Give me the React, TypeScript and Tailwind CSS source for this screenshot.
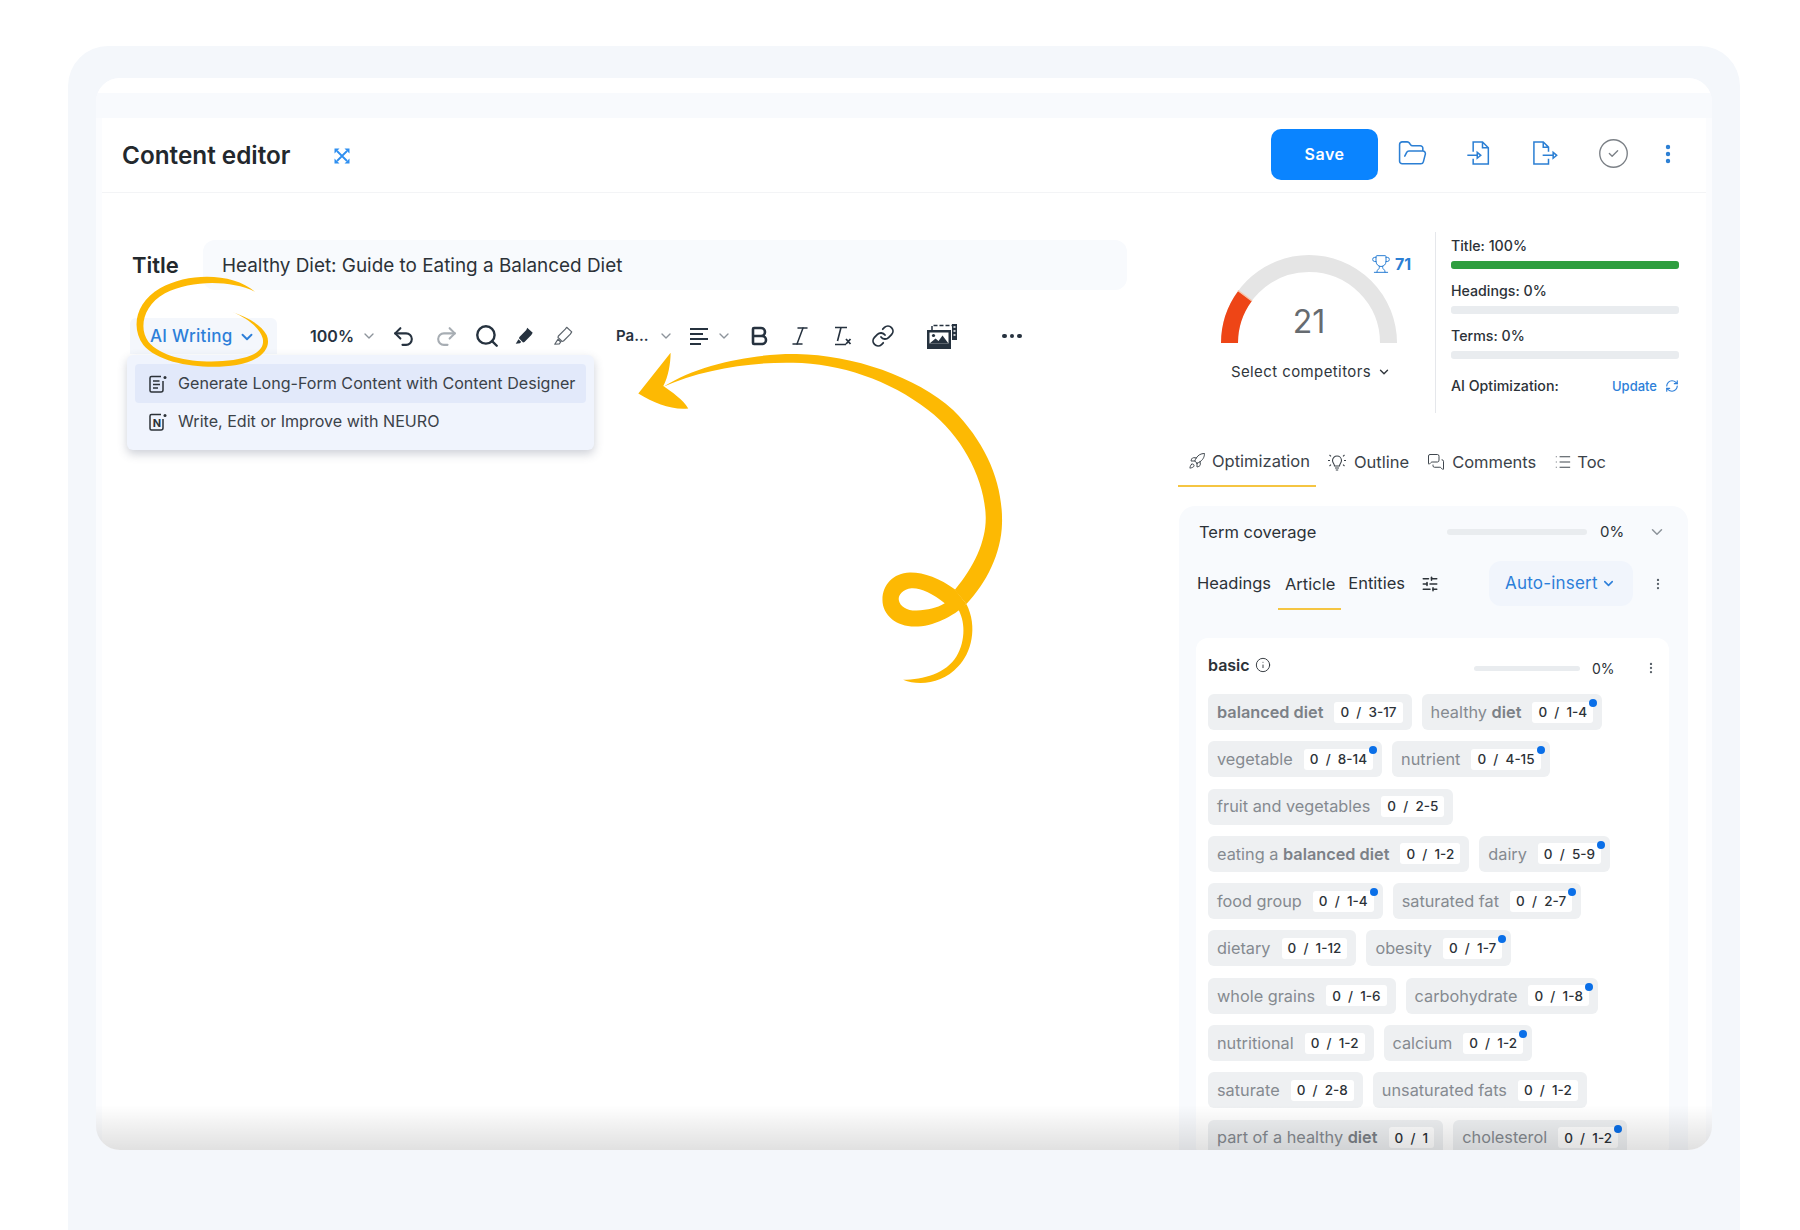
import React from 'react';
import {
  Bold,
  ChevronDown,
  CircleCheck,
  EllipsisVertical,
  FolderOpen,
  Info,
  Italic,
  Link,
  List,
  MessagesSquare,
  RefreshCw,
  Redo2,
  Rocket,
  Search,
  SlidersHorizontal,
  Trophy,
  Undo2,
} from 'lucide-react';

type Chip = { parts: [string, boolean][]; count: string; dot?: boolean };

const t = (s: string): [string, boolean] => [s, false];
const b = (s: string): [string, boolean] => [s, true];

const chipRows: Chip[][] = [
  [
    { parts: [b('balanced diet')], count: '3-17' },
    { parts: [t('healthy '), b('diet')], count: '1-4', dot: true },
  ],
  [
    { parts: [t('vegetable')], count: '8-14', dot: true },
    { parts: [t('nutrient')], count: '4-15', dot: true },
  ],
  [{ parts: [t('fruit and vegetables')], count: '2-5' }],
  [
    { parts: [t('eating a '), b('balanced diet')], count: '1-2' },
    { parts: [t('dairy')], count: '5-9', dot: true },
  ],
  [
    { parts: [t('food group')], count: '1-4', dot: true },
    { parts: [t('saturated fat')], count: '2-7', dot: true },
  ],
  [
    { parts: [t('dietary')], count: '1-12' },
    { parts: [t('obesity')], count: '1-7', dot: true },
  ],
  [
    { parts: [t('whole grains')], count: '1-6' },
    { parts: [t('carbohydrate')], count: '1-8', dot: true },
  ],
  [
    { parts: [t('nutritional')], count: '1-2' },
    { parts: [t('calcium')], count: '1-2', dot: true },
  ],
  [
    { parts: [t('saturate')], count: '2-8' },
    { parts: [t('unsaturated fats')], count: '1-2' },
  ],
  [
    { parts: [t('part of a healthy '), b('diet')], count: '1' },
    { parts: [t('cholesterol')], count: '1-2', dot: true },
  ],
];

const TermChip = ({ chip }: { chip: Chip }) => (
  <div className="relative flex h-[36px] items-center rounded-[6px] bg-[#eef0f2] pl-[9px] pr-[9px]">
    <span className="text-[16.3px] text-[#858a90]">
      {chip.parts.map(([text, bold], i) => (
        <span key={i} className={bold ? 'font-semibold text-[#7c8187]' : ''}>
          {text}
        </span>
      ))}
    </span>
    <span className="ml-[11px] flex h-[21px] items-center whitespace-pre rounded-[3px] bg-white px-[6px] text-[13.5px] font-medium text-[#2c3238]">
      {'0  /  ' + chip.count}
    </span>
    {chip.dot && <span className="absolute right-[5px] top-[5px] h-[8px] w-[8px] rounded-full bg-[#0a6fe8]" />}
  </div>
);

const ExpandIcon = () => (
  <svg width="18" height="18" viewBox="0 0 18 18" fill="none" stroke="#2f8ff0" strokeWidth="1.8">
    <path d="M4 4l10 10M14 4L4 14" />
    <path d="M1.500 6.500V1.500h5zM11.500 1.500h5v5zM16.500 11.500v5h-5zM6.500 16.500h-5v-5z" fill="#2f8ff0" stroke="none" />
  </svg>
);

const FileInIcon = () => (
  <svg width="28" height="28" viewBox="0 0 24 24" fill="none" stroke="#2b7fd4" strokeWidth="1.3">
    <path d="M7 11V2.500h8L20 7.500V21.500H7V17M15 2.500V7.500H20" />
    <path d="M2 14h8.500" />
    <path d="M10.500 11.500L13.500 14l-3 2.500z" />
  </svg>
);

const FileOutIcon = () => (
  <svg width="28" height="28" viewBox="0 0 24 24" fill="none" stroke="#2b7fd4" strokeWidth="1.3">
    <path d="M15 11V7L10.500 2.500H2.500V21.500H15V17M10.500 2.500V7H15" />
    <path d="M10 14h9" />
    <path d="M19 11.500L22 14l-3 2.500z" />
  </svg>
);

const MarkerIcon = () => (
  <svg width="22" height="22" viewBox="0 0 24 24" fill="#26323f">
    <path d="M15.500 3l6 5.500-1.500 2.500-7.500 7.500-1.500.5-4.500-4.500.5-1.500 7.500-7.500z" />
    <path d="M6 15.500l3 3-1.500 1.500-4.500.5z" />
  </svg>
);

const PenIcon = () => (
  <svg width="22" height="22" viewBox="0 0 24 24" fill="none" stroke="#5c646c" strokeWidth="1.300" strokeLinejoin="round">
    <path d="M16 2.500l5.500 5-1.500 2.500-7.500 7.500-1.500.5-4.500-4.500.5-1.500 7.500-7.500z" />
    <path d="M6.500 15.500l3 3-1.500 2-5 .5z" />
  </svg>
);

const AlignIcon = () => (
  <svg width="24" height="24" viewBox="0 0 24 24" fill="none" stroke="#26323f" strokeWidth="2">
    <path d="M3 5h18M3 10h13M3 15h18M3 20h11" />
  </svg>
);

const ClearFormatIcon = () => (
  <svg width="24" height="24" viewBox="0 0 24 24" fill="none" stroke="#26323f" strokeWidth="1.6">
    <path d="M6 3.500h12M12 3.500L8.500 17M6 20.500h11" />
    <path d="M17 15l4.500 5M21.500 15L17 20" strokeWidth="1.800" />
  </svg>
);

const ImageIcon = () => (
  <svg width="32" height="28" viewBox="0 0 32 28" fill="none">
    <path d="M6 8V3.500h20" stroke="#26323f" strokeWidth="1.500" strokeDasharray="4 2" />
    <path d="M26 2h5v16h-5z" fill="#26323f" />
    <path d="M27.500 5h2M27.500 9h2M27.500 13h2" stroke="#fff" strokeWidth="1.500" />
    <path d="M1 8h24v19H1z" fill="#26323f" />
    <path d="M3.500 10.500h19v11h-19z" fill="#fff" />
    <path d="M3.500 21.500l6-5 3 2.500 4-5.500 6 8z" fill="#26323f" />
    <circle cx="7.500" cy="13.500" r="1.600" fill="#26323f" />
  </svg>
);

const BulbIcon = () => (
  <svg width="20" height="20" viewBox="0 0 20 20" fill="none" stroke="#3b4249" strokeWidth="1.100" className="ml-[11px]">
    <path d="M7.500 14c0-2-2-3-2-5.500a4.500 4.500 0 0 1 9 0c0 2.500-2 3.500-2 5.500zM8 16h4M8.800 18h2.400" />
    <path d="M1 8.500h2M17 8.500h2M2.500 3l1.500 1.300M17.500 3L16 4.300M2.500 14l1.500-1.300M17.500 14L16 12.700" />
  </svg>
);

const DesignerIcon = () => (
  <svg width="20" height="20" viewBox="0 0 20 20" fill="none" stroke="#2c3238" strokeWidth="1.500">
    <path d="M13 2.500H3.500a1.500 1.500 0 0 0-1.500 1.500v12.500a1.500 1.500 0 0 0 1.500 1.500h9.500a2 2 0 0 0 2-2V7" />
    <path d="M5 7h6.500M5 10.500h7M5 14h5" strokeWidth="1.600" />
    <circle cx="17" cy="3.500" r="1.500" fill="#2c3238" stroke="none" />
  </svg>
);

const NeuroIcon = () => (
  <svg width="20" height="20" viewBox="0 0 20 20" fill="none" stroke="#2c3238" strokeWidth="1.500">
    <path d="M13 2.500H3.500a1.500 1.500 0 0 0-1.500 1.500v12.500a1.500 1.500 0 0 0 1.500 1.500h9.500a2 2 0 0 0 2-2V7" />
    <text x="4.700" y="14.500" fontSize="11" fontWeight="700" fill="#2c3238" stroke="none" fontFamily="Inter">
      N
    </text>
    <circle cx="17" cy="3.500" r="1.500" fill="#2c3238" stroke="none" />
  </svg>
);

const Gauge = () => (
  <svg width="176" height="88" viewBox="0 0 176 88" fill="none" strokeWidth="17">
    <path d="M8.500 88a79.500 79.500 0 0 1 159 0" stroke="#e5e5e5" />
    <path d="M8.500 88a79.500 79.500 0 0 1 15.500-47" stroke="#ee4516" />
    <path d="M17 35.500l14 10.500" stroke="#f7c3a8" strokeWidth="1.500" />
  </svg>
);

const Arrow = () => (
  <svg className="absolute left-[504px] top-[242px]" width="443" height="380" viewBox="0 0 1330 1140" fill="#fdb903">
    <path d="M115 220L212 98C212 130 205 170 190 198C215 215 250 240 265 265C215 270 165 250 115 220Z" />
    <path d="M190 200C300 130 470 100 590 102C760 105 950 170 1060 270C1160 370 1210 490 1207 610C1205 700 1160 790 1100 852L1065 810C1125 740 1160 660 1158 590C1155 480 1090 350 985 270C870 180 720 130 580 128C450 125 300 150 190 200Z" />
    <path
      fillRule="evenodd"
      d="M1065 808C1020 775 970 757 930 758C880 760 848 795 848 840C848 885 890 920 945 920C1000 920 1060 890 1100 852ZM1035 850C1000 820 960 803 935 805C910 807 895 825 897 840C900 860 925 873 950 872C985 870 1010 865 1035 850Z"
    />
    <path d="M1075 868C1095 900 1100 960 1070 1010C1040 1060 970 1080 910 1080C960 1100 1030 1090 1075 1040C1115 1000 1135 920 1100 852Z" />
  </svg>
);

const Circle = () => (
  <svg className="absolute left-[24px] top-[182px] z-20" width="200" height="120" viewBox="0 0 600 360" fill="#fdb903">
    <path d="M405 95C340 40 210 35 120 85C50 125 30 200 70 255C120 315 260 330 350 315C430 300 455 260 440 225C425 195 380 170 335 155C385 175 420 205 428 235C435 265 410 290 340 300C250 312 130 300 85 245C55 205 70 135 135 100C215 60 330 60 405 95Z" />
  </svg>
);

const StatRow = ({ label, color }: { label: string; color?: string }) => (
  <div className="mb-[12px]">
    <div className="text-[14.2px] font-medium leading-[20px] text-[#2c3238]">{label}</div>
    <div className="mt-[5px] h-[8px] rounded-[3px] bg-[#e9ecef]">
      {color && <div className={`h-full rounded-[3px] ${color}`} />}
    </div>
  </div>
);

const Toolbar = () => (
  <div className="relative ml-[28px] mt-[28px] flex h-[36px] items-center text-[#26323f]">
    <div className="flex h-[36px] w-[147px] items-center rounded-t-[6px] bg-[#f4f7fc] pl-[20px] pt-[2px] text-[17px] font-medium tracking-[0.3px] text-[#2d7fd9]">
      AI Writing
      <ChevronDown size={18} strokeWidth={2.5} className="ml-[5px]" />
    </div>
    <span className="ml-[33px] w-[45px] text-[16px] font-semibold">100%</span>
    <ChevronDown size={16} className="ml-[6px] text-[#8d949b]" />
    <Undo2 size={25} strokeWidth={2} className="ml-[14px]" />
    <Redo2 size={25} strokeWidth={2} className="ml-[18px] text-[#a7adb3]" />
    <Search size={26} strokeWidth={2.2} className="ml-[15px]" />
    <span className="ml-[13px]">
      <MarkerIcon />
    </span>
    <span className="ml-[17px]">
      <PenIcon />
    </span>
    <span className="ml-[42px] w-[33px] text-[15px] font-semibold">Pa...</span>
    <ChevronDown size={16} className="ml-[9px] text-[#8d949b]" />
    <span className="ml-[13px]">
      <AlignIcon />
    </span>
    <ChevronDown size={16} className="ml-[5px] text-[#8d949b]" />
    <Bold size={24} strokeWidth={2.6} className="ml-[15px]" />
    <Italic size={24} strokeWidth={1.5} className="ml-[17px]" />
    <span className="ml-[17px]">
      <ClearFormatIcon />
    </span>
    <Link size={24} strokeWidth={1.8} className="ml-[18px]" />
    <span className="ml-[31px]">
      <ImageIcon />
    </span>
    <span className="ml-[42px] flex w-[24px] justify-center gap-[3px]">
      <i className="h-[4.5px] w-[4.5px] rounded-full bg-[#26323f]" />
      <i className="h-[4.5px] w-[4.5px] rounded-full bg-[#26323f]" />
      <i className="h-[4.5px] w-[4.5px] rounded-full bg-[#26323f]" />
    </span>

    <div className="absolute left-[-3px] top-[37px] z-10 h-[95px] w-[467px] rounded-[6px] bg-[#f0f4fd] px-[8px] pt-[9px] text-[16.1px] text-[#3b4249] shadow-[0_4px_10px_rgba(60,70,100,0.25)]">
      <div className="flex h-[39px] items-center rounded-[4px] bg-[#e2e9fa] pl-[13px]">
        <DesignerIcon />
        <span className="ml-[10px]">Generate Long-Form Content with Content Designer</span>
      </div>
      <div className="flex h-[37px] items-center pl-[13px]">
        <NeuroIcon />
        <span className="ml-[10px]">Write, Edit or Improve with NEURO</span>
      </div>
    </div>
  </div>
);

const RightPanel = () => (
  <div className="w-[509px]">
    <div className="mt-[39px] flex">
      <div className="relative w-[256px] pt-[23px]">
        <div className="ml-[42px] w-[176px]">
          <Gauge />
        </div>
        <span className="absolute left-[42px] top-[72px] w-[176px] text-center text-[32px] leading-[36px] text-[#666b70]">
          21
        </span>
        <div className="absolute left-[192px] top-[20px] flex items-center gap-[4px] text-[#2b7fd4]">
          <Trophy size={20} strokeWidth={1.2} />
          <span className="text-[16px] font-bold">71</span>
        </div>
        <div className="mt-[18px] flex items-center justify-center gap-[6px] pl-[8px] text-[15px] tracking-[0.4px] text-[#30363c]">
          Select competitors
          <ChevronDown size={14} strokeWidth={2.4} />
        </div>
      </div>
      <div className="h-[181px] w-px bg-[#e5e7eb]" />
      <div className="ml-[15px] w-[228px] pt-[4px]">
        <StatRow label="Title: 100%" color="bg-[#2e9e3f]" />
        <StatRow label="Headings: 0%" />
        <StatRow label="Terms: 0%" />
        <div className="mt-[17px] flex items-center text-[14.2px] font-medium leading-[20px] text-[#2c3238]">
          AI Optimization:
          <span className="ml-auto text-[13px] text-[#2d7fd9]">Update</span>
          <RefreshCw size={14} className="ml-[8px] text-[#2d7fd9]" />
        </div>
      </div>
    </div>

    <div className="-ml-px mt-[24px] flex h-[50px] items-center text-[16.5px] text-[#3b4249]">
      <div className="flex h-full w-[138px] items-center border-b-2 border-[#f5c542] pl-[10px]">
        <Rocket size={18} strokeWidth={1.3} />
        <span className="ml-[6px]">Optimization</span>
      </div>
      <BulbIcon />
      <span className="ml-[7px]">Outline</span>
      <MessagesSquare size={18} strokeWidth={1.3} className="ml-[18px]" />
      <span className="ml-[7px]">Comments</span>
      <List size={18} strokeWidth={1.3} className="ml-[18px]" />
      <span className="ml-[5px]">Toc</span>
    </div>

    <div className="mt-[19px] h-[700px] rounded-[16px] bg-[#f8fafd] pt-[14px]">
      <div className="flex h-[24px] items-center pl-[20px] text-[16.5px] text-[#2c3238]">
        Term coverage
        <div className="ml-auto h-[6px] w-[140px] rounded-full bg-[#e9ecef]" />
        <span className="ml-[13px] w-[24px] text-[15px]">0%</span>
        <ChevronDown size={18} className="ml-[24px] mr-[22px] text-[#8d949b]" />
      </div>

      <div className="mt-[17px] flex h-[45px] items-center pl-[18px] pr-[23px] text-[16.5px] text-[#2c3238]">
        <span>Headings</span>
        <span className="relative ml-[14px] leading-[24px]">
          Article
          <i className="absolute -left-[7px] -right-[6px] top-[36px] h-[2px] bg-[#f5c542]" />
        </span>
        <span className="ml-[13px]">Entities</span>
        <SlidersHorizontal size={18} className="ml-[16px]" />
        <div className="ml-auto flex h-[45px] w-[144px] items-center rounded-[12px] bg-[#f1f5fc] pl-[16px] text-[17px] tracking-[0.2px] text-[#2d7fd9]">
          Auto-insert
          <ChevronDown size={15} strokeWidth={2.5} className="ml-[3px]" />
        </div>
        <EllipsisVertical size={14} className="ml-[18px] text-[#5c646c]" />
      </div>

      <div className="ml-[17px] mt-[32px] h-[520px] w-[473px] rounded-[12px] bg-white pl-[12px] pt-[15px]">
        <div className="flex h-[24px] items-center text-[#2c3238]">
          <span className="text-[16px] font-semibold">basic</span>
          <Info size={16} strokeWidth={1.4} className="ml-[5px]" />
          <div className="ml-auto mt-[6px] h-[5px] w-[106px] rounded-full bg-[#e9ecef]" />
          <span className="ml-[12px] mt-[6px] w-[24px] text-[14px]">0%</span>
          <EllipsisVertical size={14} className="ml-[28px] mr-[11px] mt-[6px] text-[#5c646c]" />
        </div>
        <div className="mt-[17px] flex flex-col gap-[11.3px]">
          {chipRows.map((row, i) => (
            <div key={i} className="flex gap-[10px]">
              {row.map((chip, j) => (
                <TermChip key={j} chip={chip} />
              ))}
            </div>
          ))}
        </div>
      </div>
    </div>
  </div>
);

export default function App() {
  return (
    <div className="h-[1230px] w-[1800px] overflow-hidden bg-white pl-[68px] pt-[46px] font-['Inter',sans-serif]">
      <div className="h-[1184px] w-[1672px] rounded-t-[40px] bg-[#f4f7fb] pl-[28px] pt-[32px]">
        <div className="relative h-[1072px] w-[1616px] overflow-hidden rounded-[24px] bg-[#fbfcfe]">
          <div className="h-[15px] bg-white" />
          <div className="h-[25px] bg-[#f8fafd]" />
          <div className="mx-[6px] h-[1032px] bg-white">
            <div className="flex h-[75px] items-center border-b border-[#f3f4f6] pl-[20px] pr-[26px]">
              <h1 className="text-[24.3px] font-semibold text-[#23282d]">Content editor</h1>
              <span className="ml-[42px] mt-[2px]">
                <ExpandIcon />
              </span>
              <button className="ml-auto -mt-[2px] h-[51px] w-[107px] rounded-[10px] bg-[#0a84ff] text-[16px] font-semibold tracking-[0.5px] text-white">
                Save
              </button>
              <FolderOpen size={31} strokeWidth={1.2} className="-mt-[3px] ml-[19px] text-[#2b7fd4]" />
              <span className="-mt-[5px] ml-[37px]">
                <FileInIcon />
              </span>
              <span className="-mt-[5px] ml-[38px]">
                <FileOutIcon />
              </span>
              <CircleCheck size={33} strokeWidth={1} className="-mt-[3px] ml-[38px] text-[#7c8187]" />
              <EllipsisVertical size={24} strokeWidth={2.4} className="-mt-[3px] ml-[26px] text-[#2b7fd4]" />
            </div>
            <div className="flex">
              <div className="w-[1077px] shrink-0">
                <div className="ml-[30px] mt-[47px] flex items-center">
                  <span className="w-[71px] text-[22px] font-semibold text-[#23282d]">Title</span>
                  <div className="flex h-[50px] w-[924px] items-center rounded-[12px] bg-[#f8fafd] pl-[19px] pt-[2px] text-[18.9px] text-[#2c3238]">
                    Healthy Diet: Guide to Eating a Balanced Diet
                  </div>
                </div>
                <Toolbar />
              </div>
              <RightPanel />
            </div>
          </div>
          <Arrow />
          <Circle />
          <div className="absolute inset-x-0 bottom-0 h-[45px] bg-linear-to-b from-black/0 to-black/[0.12]" />
        </div>
      </div>
    </div>
  );
}
